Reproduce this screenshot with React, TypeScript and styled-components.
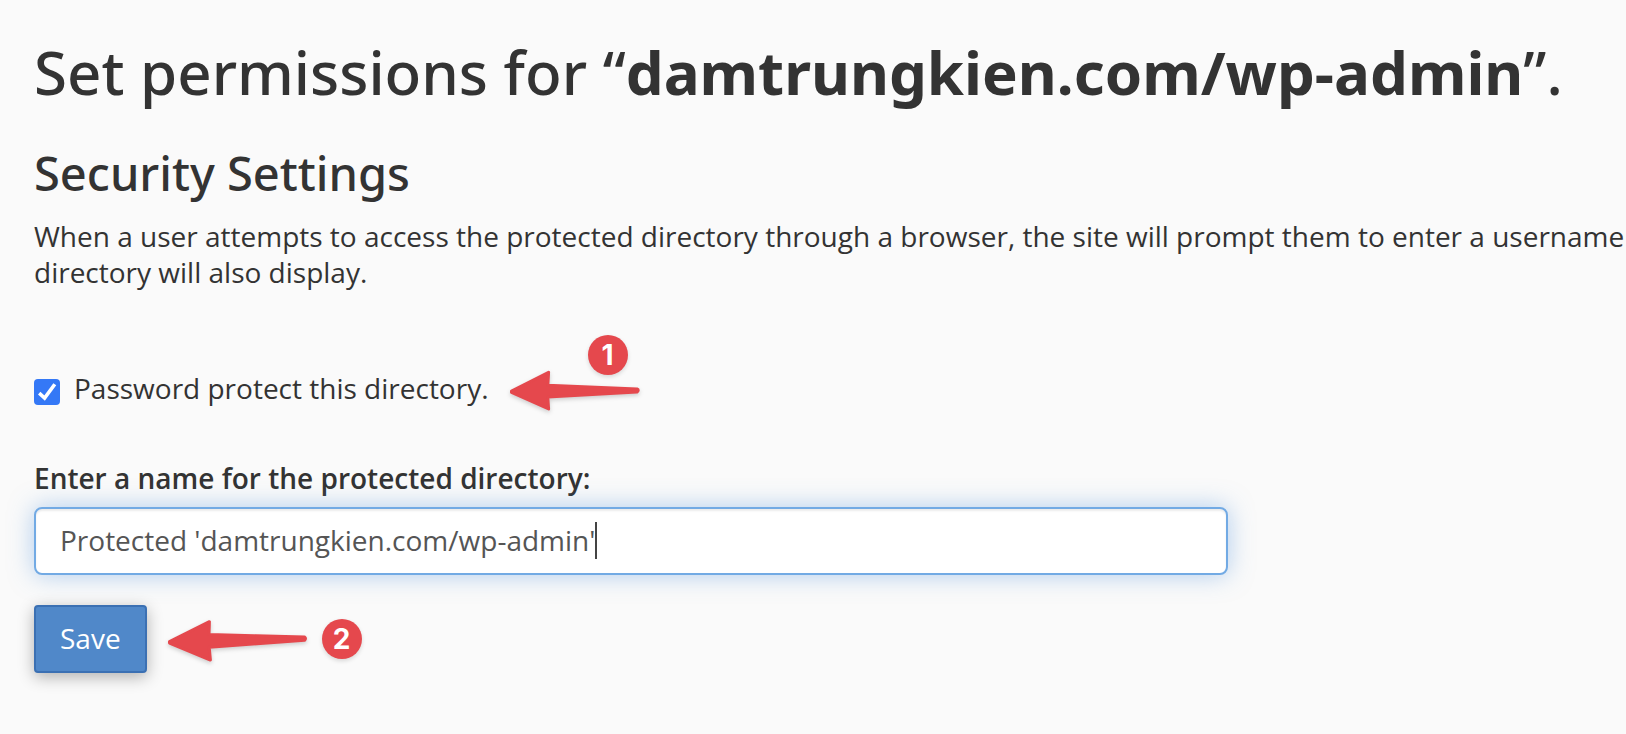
import React, { useState } from 'react';
import styled, { createGlobalStyle } from 'styled-components';

const GlobalStyle = createGlobalStyle`
  *, *::before, *::after {
    box-sizing: border-box;
  }
  body {
    margin: 0;
    background: #fafafa;
    color: #333;
    font-family: 'Open Sans', 'Noto Sans', sans-serif;
    font-size: 28px;
    line-height: 36px;
  }
`;

const Page = styled.main`
  padding: 39px 0 60px 34px;
`;

const Title = styled.h1`
  margin: 0 0 42px;
  font-family: 'Noto Sans', sans-serif;
  font-size: 60px;
  font-weight: 500;
  line-height: 66px;
`;

const SectionTitle = styled.h2`
  margin: 0 0 19px;
  font-family: 'Noto Sans', sans-serif;
  font-size: 47px;
  font-weight: 500;
  line-height: 52px;
`;

const Description = styled.p`
  margin: 0 0 80px;
`;

const Row = styled.div`
  display: flex;
  align-items: center;
`;

const CheckLabel = styled.label`
  display: flex;
  align-items: flex-start;
  gap: 14px;
`;

const Checkbox = styled.input`
  appearance: none;
  flex: none;
  width: 26px;
  height: 26px;
  margin: 9px 0 0;
  border: 2px solid #767676;
  border-radius: 4px;
  background: #fff;

  &:checked {
    border: 0;
    background: #3478f6
      url("data:image/svg+xml,%3Csvg xmlns='http://www.w3.org/2000/svg' viewBox='0 0 26 26'%3E%3Cpath d='M5.2 14.2L10.6 19L20.8 5.2' fill='none' stroke='white' stroke-width='3.6'/%3E%3C/svg%3E");
  }
`;

const FieldLabel = styled.label`
  display: block;
  margin: 54px 0 11px;
  font-weight: 600;
`;

const Field = styled.div`
  position: relative;
  max-width: 1194px;
  margin: 0 34px 30px 0;
`;

const TextInput = styled.input`
  display: block;
  width: 100%;
  height: 68px;
  padding: 0 24px 2px;
  border: 2px solid #72aae4;
  border-radius: 8px;
  outline: none;
  background: #fff;
  color: #555;
  font: inherit;
  box-shadow: inset 0 2px 2px rgba(0, 0, 0, 0.08), 0 0 24px rgba(102, 160, 225, 0.5);
`;

const Caret = styled.span`
  position: absolute;
  top: 15px;
  left: 561px;
  width: 2px;
  height: 37px;
  background: #444;
`;

const SaveButton = styled.button`
  height: 68px;
  padding: 0 24px 2px;
  border: 2px solid #3b70b3;
  border-radius: 4px;
  background: #5088c9;
  color: #fff;
  font: inherit;
  box-shadow: 0 4px 16px rgba(0, 0, 0, 0.3);
`;

const Callout = styled.div`
  position: relative;
  display: flex;
  align-items: center;
  gap: 15px;
  margin-left: 21px;
`;

const Arrow = styled.svg`
  display: block;
  overflow: visible;
  fill: #e5484d;
  stroke: #e5484d;
  stroke-width: 3;
  stroke-linejoin: round;
  filter: drop-shadow(0 2px 2px rgba(0, 0, 0, 0.18));
`;

const Badge = styled.span<{ $above?: boolean }>`
  display: flex;
  align-items: center;
  justify-content: center;
  width: 40px;
  height: 40px;
  border-radius: 50%;
  background: #e5484d;
  color: #fff;
  font-family: Inter, sans-serif;
  font-weight: 700;
  box-shadow: 0 2px 4px rgba(0, 0, 0, 0.14);
  ${(p) => p.$above && 'position: absolute; left: 78px; bottom: 31px;'}
`;

export default function App() {
  const [enabled, setEnabled] = useState(true);
  const [name, setName] = useState("Protected 'damtrungkien.com/wp-admin'");

  return (
    <>
      <GlobalStyle />
      <Page>
        <Title>
          Set permissions for “<strong>damtrungkien.com/wp-admin</strong>”.
        </Title>
        <SectionTitle>Security Settings</SectionTitle>
        <Description>
          When a user attempts to access the protected directory through a browser, the site will
          prompt them to enter a username directory will also display.
        </Description>
        <Row>
          <CheckLabel htmlFor="protect">
            <Checkbox
              id="protect"
              type="checkbox"
              checked={enabled}
              onChange={(e) => setEnabled(e.target.checked)}
            />
            Password protect this directory.
          </CheckLabel>
          <Callout>
            <Arrow width="130" height="36" viewBox="0 0 130 36" aria-hidden="true">
              <path d="M1.5 21L38.6 2.3L37.8 15.3L127 19Q129.5 20 127 22L37.8 27L38.6 39L1.5 22.5Z" />
            </Arrow>
            <Badge $above>1</Badge>
          </Callout>
        </Row>
        <FieldLabel htmlFor="name">Enter a name for the protected directory:</FieldLabel>
        <Field>
          <TextInput id="name" type="text" value={name} onChange={(e) => setName(e.target.value)} />
          <Caret />
        </Field>
        <Row>
          <SaveButton type="button">Save</SaveButton>
          <Callout>
            <Arrow width="139" height="40" viewBox="0 0 139 40" aria-hidden="true">
              <path d="M1.5 22.5L41.4 2.7L41 15.5L136.5 18Q138.5 19.5 136.5 21.3L41.2 28.2L42.4 41L1.5 24Z" />
            </Arrow>
            <Badge>2</Badge>
          </Callout>
        </Row>
      </Page>
    </>
  );
}
